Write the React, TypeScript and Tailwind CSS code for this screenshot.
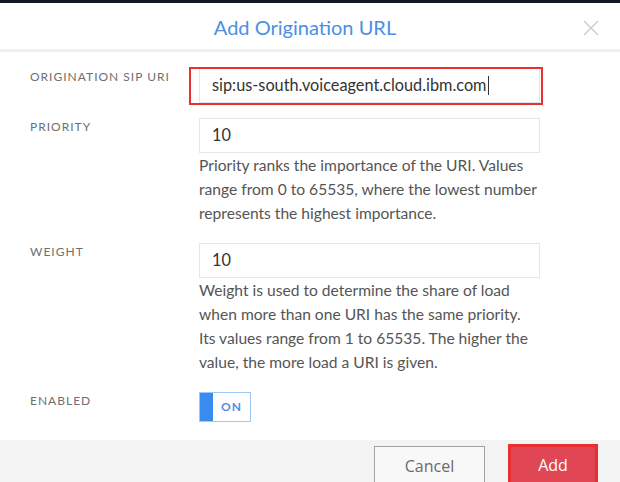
import React from "react";

const labelCls =
  "w-[169px] shrink-0 pl-[30px] whitespace-nowrap text-[12px] leading-[18px] tracking-[1px] text-[#6f6f6f] uppercase";

const inputCls =
  "w-[341px] h-[35px] border border-[#e6e6e6] bg-white pl-[12px] flex items-center text-[16.3px] text-[#333]";

const helpCls = "w-[342px] text-[15.6px] leading-[24px] text-[#555]";

const Field = ({ label, children, className = "" }: { label: string; children: React.ReactNode; className?: string }) => (
  <div className={`flex items-start shrink-0 ${className}`}>
    <div className={labelCls}>{label}</div>
    <div className="pl-[30px]">{children}</div>
  </div>
);

export default function App() {
  return (
    <div className="w-[620px] h-[482px] overflow-hidden bg-white flex flex-col font-['Lato',sans-serif]">
      <div className="h-[3px] shrink-0 bg-[#141824]" />

      <header className="relative h-[49px] shrink-0 flex items-center justify-center pr-[10px] border-b-[3px] border-[#f0f0f0]">
        <h1 className="text-[20px] text-[#4a90e2] pt-[2px]">Add Origination URL</h1>
        <button className="absolute right-[21px] top-[17px] text-[#c8c8c8]">
          <svg width="16" height="16" viewBox="0 0 16 16" fill="none" stroke="currentColor" strokeWidth="1.3">
            <path d="M1 1 L15 15 M15 1 L1 15" />
          </svg>
        </button>
      </header>

      <div className="flex flex-col shrink-0 pt-[16px]">
        <Field label="Origination SIP URI">
          <div className="relative">
            <span className="absolute left-[-10px] top-[-1px] w-[354px] h-[38px] border-[2.5px] border-[#e8302f] pointer-events-none" />
            <div className={inputCls}>
              sip:us-south.voiceagent.cloud.ibm.com
              <span className="ml-[1px] w-[1px] h-[19px] bg-[#333]" />
            </div>
          </div>
        </Field>

        <Field label="Priority" className="mt-[15px]">
          <div className={inputCls}>10</div>
          <p className={helpCls}>
            Priority ranks the importance of the URI. Values range from 0 to 65535, where the lowest number represents
            the highest importance.
          </p>
        </Field>

        <Field label="Weight" className="mt-[18px]">
          <div className={inputCls}>10</div>
          <p className={helpCls}>
            Weight is used to determine the share of load when more than one URI has the same priority. Its values
            range from 1 to 65535. The higher the value, the more load a URI is given.
          </p>
        </Field>

        <Field label="Enabled" className="mt-[18px]">
          <div className="flex w-[52px] h-[30px] border border-[#9cc8f8] bg-white">
            <div className="w-[13px] bg-[#3a8bef]" />
            <div className="flex-1 flex items-center justify-center text-[12px] font-bold tracking-[1px] text-[#4a8fe6]">
              ON
            </div>
          </div>
        </Field>
      </div>

      <footer className="mt-[18px] flex-1 bg-[#f3f3f3] flex items-start justify-end pt-[4px] pr-[22px] gap-[23px] font-['Open_Sans',sans-serif]">
        <button className="mt-[2px] w-[111px] h-[40px] shrink-0 border border-[#a3a3a3] bg-[#f8f8f8] text-[16px] text-[#6a6a6a]">
          Cancel
        </button>
        <button className="w-[90px] h-[42px] shrink-0 border-[3px] border-[#e8302f] bg-[#e04654] text-[16px] text-white">
          Add
        </button>
      </footer>
    </div>
  );
}
